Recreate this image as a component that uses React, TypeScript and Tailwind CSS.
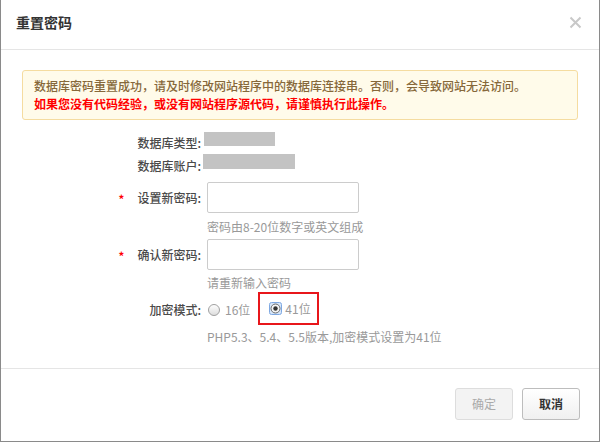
export default function App() {
  return (
    <div className="w-[600px] h-[443px] bg-white font-['Noto_Sans_CJK_SC',sans-serif]">
      <div className="w-full h-[442px] flex flex-col border-l border-r border-b border-[#8a8a8a] bg-white">
        {/* Header */}
        <div className="h-[50px] shrink-0 flex items-start justify-between border-b border-[#e5e5e5] pl-[15px] pr-[15px] pt-[12px]">
          <h1 className="text-[14px] leading-[20px] font-bold text-[#333]">重置密码</h1>
          <svg width="13" height="13" viewBox="0 0 13 13" className="mt-[4px] mr-[2px]">
            <path d="M1.5 1.5 L11.5 11.5 M11.5 1.5 L1.5 11.5" stroke="#c8c8c8" strokeWidth="2" />
          </svg>
        </div>

        {/* Body */}
        <div className="flex-1 flex flex-col pt-[20px]">
          <div className="mx-[21px] rounded-[3px] border border-[#f5dca0] bg-[#fffbea] px-[11px] py-[6px] text-[12px] leading-[18px]">
            <p className="text-[#86683a] font-medium">
              数据库密码重置成功，请及时修改网站程序中的数据库连接串。否则，会导致网站无法访问。
            </p>
            <p className="text-[#ff0000] font-bold">
              如果您没有代码经验，或没有网站程序源代码，请谨慎执行此操作。
            </p>
          </div>

          <div className="mt-[11px] text-[12px] text-[#4a4a4a] font-medium">
            {/* DB type */}
            <div className="flex items-center h-[23px]">
              <div className="w-[200px] text-right">数据库类型:</div>
              <div className="ml-[3px] w-[71px] h-[14px] bg-[#c3c3c3] -mt-[8px]" />
            </div>

            {/* DB account */}
            <div className="flex items-center h-[23px]">
              <div className="w-[200px] text-right">数据库账户:</div>
              <div className="ml-[2px] w-[92px] h-[15px] bg-[#c3c3c3] -mt-[9px]" />
            </div>

            {/* New password */}
            <div className="flex items-center h-[31px] mt-[5px]">
              <div className="w-[200px] flex justify-end items-center">
                <span className="text-[#ff0000] text-[13px] mr-[13px] translate-y-[2px]">*</span>
                <span>设置新密码:</span>
              </div>
              <input
                type="password"
                className="ml-[6px] w-[152px] h-[31px] rounded-[2px] border border-[#ccc] bg-white outline-none"
              />
            </div>
            <div className="mt-[5px] h-[18px] leading-[18px] pl-[206px] text-[#999] font-normal">
              密码由8-20位数字或英文组成
            </div>

            {/* Confirm password */}
            <div className="flex items-center h-[31px] mt-[3px]">
              <div className="w-[200px] flex justify-end items-center">
                <span className="text-[#ff0000] text-[13px] mr-[13px] translate-y-[2px]">*</span>
                <span>确认新密码:</span>
              </div>
              <input
                type="password"
                className="ml-[6px] w-[152px] h-[31px] rounded-[2px] border border-[#ccc] bg-white outline-none"
              />
            </div>
            <div className="mt-[4px] h-[18px] leading-[18px] pl-[206px] text-[#999] font-normal">
              请重新输入密码
            </div>

            {/* Encrypt mode */}
            <div className="flex items-center h-[33px]">
              <div className="w-[200px] text-right translate-y-[1px]">加密模式:</div>
              <label className="ml-[7px] flex items-center gap-[5px] text-[#999] font-normal translate-y-[1px]">
                <svg width="12" height="12" viewBox="0 0 12 12">
                  <defs>
                    <linearGradient id="rg" x1="0" y1="0" x2="0" y2="1">
                      <stop offset="0" stopColor="#ffffff" />
                      <stop offset="1" stopColor="#dcdcdc" />
                    </linearGradient>
                  </defs>
                  <circle cx="6" cy="6" r="5.5" fill="url(#rg)" stroke="#a0a0a0" />
                </svg>
                16位
              </label>
              <div className="ml-[8px] w-[61px] h-[33px] border-2 border-[#e8161b] flex items-center pl-[9px] gap-[3px] text-[#999] font-normal">
                <svg width="13" height="13" viewBox="0 0 13 13">
                  <rect x="0.5" y="0.5" width="12" height="12" rx="2" fill="#d6e6fa" stroke="#7ea8e2" />
                  <circle cx="6.5" cy="6.5" r="4.5" fill="#f4f4f4" stroke="#6b6b6b" />
                  <circle cx="6.5" cy="6.5" r="2.2" fill="#333" />
                </svg>
                41位
              </div>
            </div>
            <div className="mt-[3px] h-[18px] leading-[18px] pl-[206px] text-[#999] font-normal">
              PHP5.3、5.4、5.5版本,加密模式设置为41位
            </div>
          </div>
        </div>

        {/* Footer */}
        <div className="h-[73px] shrink-0 border-t border-[#e5e5e5] flex items-start justify-end gap-[9px] pt-[19px] pr-[19px]">
          <button
            disabled
            className="w-[58px] h-[32px] rounded-[3px] border border-[#ddd] bg-[#f3f3f3] text-[12px] text-[#aaa]"
          >
            确定
          </button>
          <button className="w-[58px] h-[32px] rounded-[3px] border border-[#bdbdbd] bg-gradient-to-b from-[#ffffff] to-[#f0f0f0] text-[12px] font-bold text-[#333]">
            取消
          </button>
        </div>
      </div>
    </div>
  );
}
